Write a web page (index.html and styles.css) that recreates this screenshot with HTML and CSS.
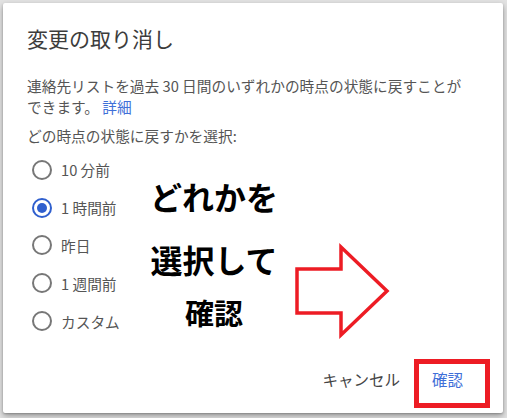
FILE: index.html
```html
<!DOCTYPE html>
<html lang="ja">
<head>
<meta charset="utf-8">
<link rel="stylesheet" href="styles.css">
</head>
<body>
<div class="page">
  <div class="dialog">
    <h1 class="title">変更の取り消し</h1>
    <p class="desc">連絡先リストを過去 30 日間のいずれかの時点の状態に戻すことが<br>できます。 <a class="link">詳細</a></p>
    <p class="prompt">どの時点の状態に戻すかを選択:</p>
    <ul class="options">
      <li class="option"><span class="radio"></span><span class="label">10 分前</span></li>
      <li class="option"><span class="radio checked"></span><span class="label">1 時間前</span></li>
      <li class="option"><span class="radio"></span><span class="label">昨日</span></li>
      <li class="option"><span class="radio"></span><span class="label">1 週間前</span></li>
      <li class="option"><span class="radio"></span><span class="label">カスタム</span></li>
    </ul>
    <div class="footer">
      <button class="btn cancel">キャンセル</button>
      <button class="btn confirm">確認</button>
    </div>
  </div>

  <div class="note note1">どれかを</div>
  <div class="note note2">選択して</div>
  <div class="note note3">確認</div>
  <svg class="marks" width="507" height="418" viewBox="0 0 507 418">
    <polygon points="297,269 341,269 341,247 387,291 341,335 341,313 297,313" fill="none" stroke="#ed1c24" stroke-width="3.5" stroke-linejoin="miter"/>
    <rect x="416.5" y="361.5" width="71" height="44" fill="none" stroke="#ed1c24" stroke-width="5"/>
  </svg>
</div>
</body>
</html>
```

FILE: styles.css
```css
* { box-sizing: border-box; }
html, body { margin: 0; padding: 0; }
body {
  background: #e2e2e2;
  font-family: "Noto Sans CJK JP", "Noto Sans", sans-serif;
  width: 507px;
  height: 418px;
  overflow: hidden;
}
.page {
  position: relative;
  width: 507px;
  height: 418px;
  padding: 3px 4px 5px 3px;
}
.dialog {
  position: relative;
  width: 500px;
  height: 410px;
  background: #fff;
  border-radius: 2px;
  box-shadow: 0 3px 6px rgba(0,0,0,0.32), 0 1px 2px rgba(0,0,0,0.2);
  padding: 21px 24px 0 24px;
  display: flex;
  flex-direction: column;
}
.title {
  margin: 0;
  font-size: 21px;
  font-weight: 400;
  line-height: 28px;
  color: #3c3c3c;
}
.desc {
  margin: 23px 0 0 0;
  font-size: 14.7px;
  line-height: 21px;
  color: #555;
}
.link { color: #3f6fd8; }
.prompt {
  margin: 8px 0 0 0;
  font-size: 14.7px;
  line-height: 21px;
  color: #555;
}
.options {
  list-style: none;
  margin: 5px 0 0 0;
  padding: 0;
  display: flex;
  flex-direction: column;
}
.option {
  display: flex;
  align-items: center;
  height: 37.8px;
  padding-left: 5px;
}
.radio {
  width: 20px;
  height: 20px;
  border: 2px solid #777;
  border-radius: 50%;
  display: flex;
  align-items: center;
  justify-content: center;
  flex: none;
}
.radio.checked { border-color: #2f5fce; }
.radio.checked::after {
  content: "";
  width: 10px;
  height: 10px;
  border-radius: 50%;
  background: #2f5fce;
}
.label {
  margin-left: 9px;
  font-size: 14.7px;
  color: #555;
}
.footer {
  margin-top: auto;
  display: flex;
  justify-content: flex-end;
  padding-bottom: 22px;
}
.btn {
  border: 0;
  background: none;
  font-family: inherit;
  font-size: 15.5px;
  line-height: 24px;
  padding: 0 16px;
}
.cancel { color: #444; }
.confirm { color: #3f6fd8; }
.note {
  position: absolute;
  left: 134px;
  width: 160px;
  text-align: center;
  font-weight: 700;
  color: #000;
  font-size: 32px;
  line-height: 40px;
}
.note1 { top: 176px; }
.note2 { top: 239px; }
.note3 { top: 292px; font-size: 29px; }
.marks {
  position: absolute;
  left: 0;
  top: 0;
}
```
